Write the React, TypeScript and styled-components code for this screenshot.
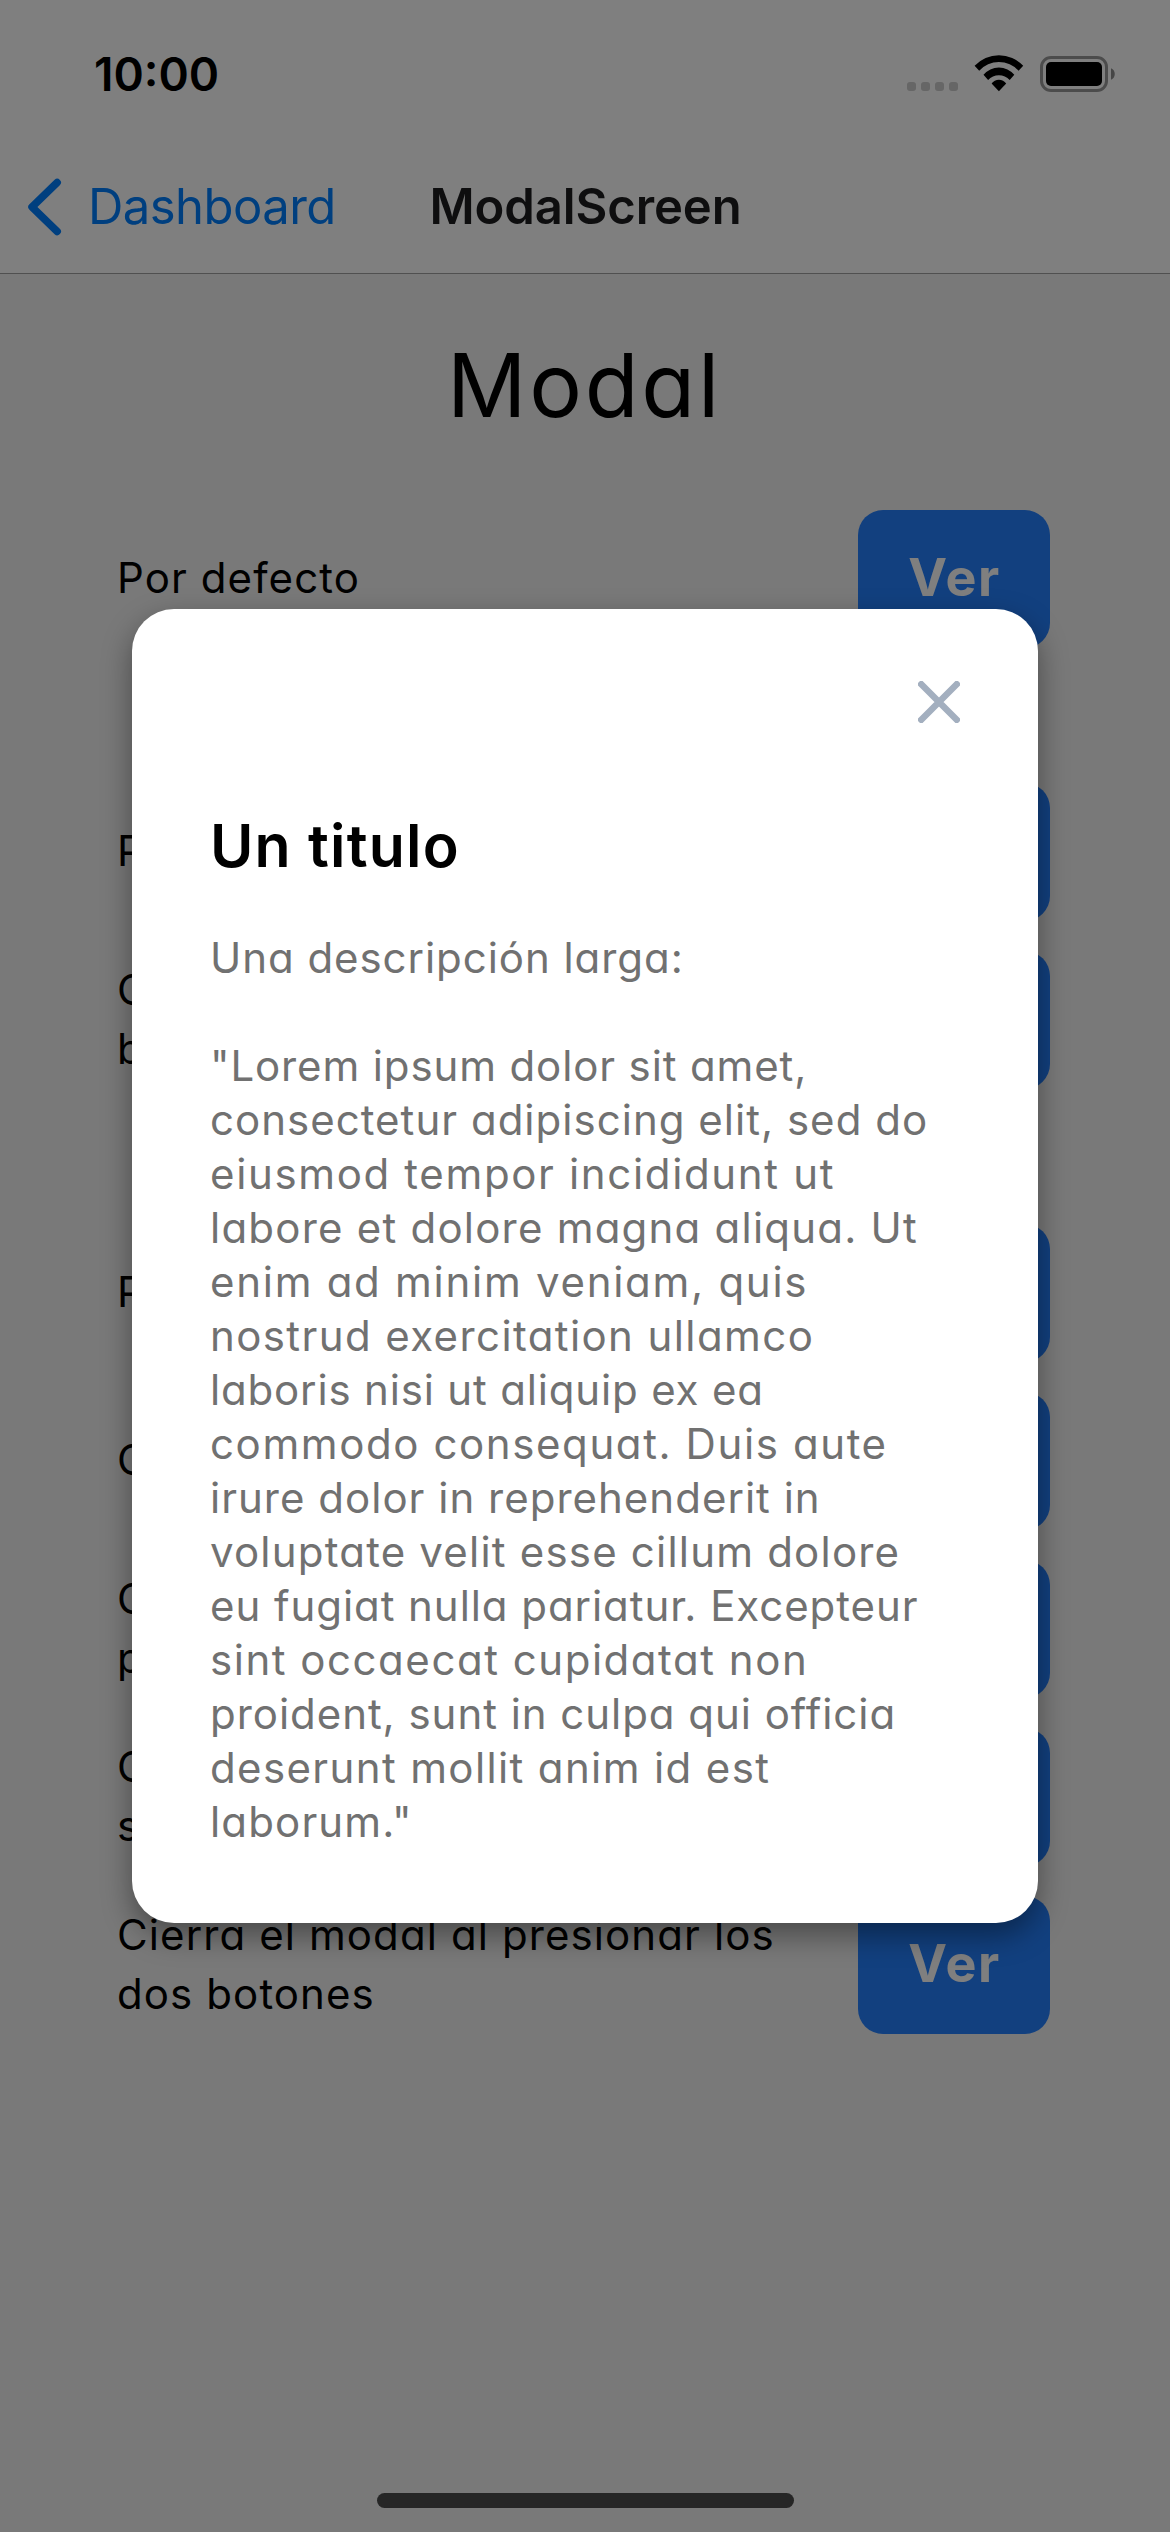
import React from "react";
import styled, { createGlobalStyle } from "styled-components";

const GlobalStyle = createGlobalStyle`
  *, *::before, *::after { box-sizing: border-box; }
  body { margin: 0; background: #797979; font-family: Inter, "Liberation Sans", sans-serif; }
  h1, h2, p { margin: 0; font-weight: 400; }
`;

const Screen = styled.div`
  position: relative;
  width: 1170px;
  height: 2532px;
  display: flex;
  flex-direction: column;
  background: #f2f2f2;
  overflow: hidden;
  color: #000;
`;

const Header = styled.header`
  background: #fff;
  height: 274px;
  border-bottom: 1px solid #a0a0a0;
`;

const StatusBar = styled.div`
  height: 141px;
  padding: 48px 54px 0 94px;
  display: flex;
  justify-content: space-between;
  align-items: flex-start;
`;

const Time = styled.span`
  font-size: 46px;
  font-weight: 600;
  line-height: 52px;
`;

const StatusIcons = styled.div`
  display: flex;
  align-items: flex-end;
  height: 37px;
  margin-top: 7px;
`;

const Dots = styled.div`
  display: flex;
  gap: 5px;
  margin: 0 16px 1px 0;
`;

const Dot = styled.span`
  width: 9px;
  height: 9px;
  border-radius: 3px;
  background: #cccccc;
`;

const WifiGlyph = styled.svg`
  width: 50px;
  height: 37px;
  margin-right: 16px;
`;

const BatteryGlyph = styled.svg`
  width: 76px;
  height: 36px;
`;

const NavBar = styled.nav`
  height: 132px;
  display: grid;
  grid-template-columns: 1fr auto 1fr;
  align-items: center;
`;

const BackLink = styled.a`
  display: flex;
  align-items: center;
  gap: 26px;
  padding-left: 27px;
  color: #007fff;
`;

const ChevronGlyph = styled.svg`
  width: 35px;
  height: 58px;
`;

const BackLabel = styled.span`
  font-size: 49px;
  line-height: 60px;
  letter-spacing: -0.55px;
`;

const NavTitle = styled.span`
  font-size: 49px;
  line-height: 60px;
  font-weight: 600;
  letter-spacing: -0.1px;
  padding-left: 1px;
  color: #1c1c1e;
`;

const Content = styled.main`
  flex: 1;
  display: flex;
  flex-direction: column;
  padding: 51px 120px 24px 117px;
  font-feature-settings: "cv11" 1;
`;

const PageTitle = styled.h1`
  font-size: 88px;
  line-height: 120px;
  letter-spacing: 2.7px;
  text-indent: 2px;
  text-align: center;
  margin-bottom: 65px;
`;

const Groups = styled.div`
  display: flex;
  flex-direction: column;
  gap: 135px;
`;

const Group = styled.section`
  display: flex;
  flex-direction: column;
  gap: 30px;
`;

const Row = styled.div`
  height: 138px;
  display: flex;
  align-items: center;
  justify-content: space-between;
`;

const RowLabel = styled.p`
  font-size: 42px;
  line-height: 58.5px;
  letter-spacing: 1.1px;
  padding-bottom: 1px;
  white-space: pre;
`;

const ViewButton = styled.button`
  width: 192px;
  height: 138px;
  border: 0;
  padding: 0 0 2px;
  border-radius: 25px;
  background: #2480ff;
  color: #fff;
  font: 700 52px/60px Inter, sans-serif;
  letter-spacing: 1.6px;
  text-indent: 1px;
`;

const HomeIndicator = styled.div`
  align-self: center;
  width: 417px;
  height: 15px;
  border-radius: 8px;
  margin: auto 0 0 4px;
  background: #4c4c4c;
`;

const Backdrop = styled.div`
  position: absolute;
  inset: 0;
  display: flex;
  align-items: center;
  justify-content: center;
  background: rgba(0, 0, 0, 0.5);
`;

const Card = styled.div`
  width: 906px;
  padding: 72px 78px 74px;
  border-radius: 42px;
  background: #fff;
  box-shadow: 0 12px 30px rgba(0, 0, 0, 0.4);
  font-feature-settings: "cv11" 1;
`;

const CloseRow = styled.div`
  display: flex;
  justify-content: flex-end;
  height: 42px;
`;

const CloseGlyph = styled.svg`
  width: 42px;
  height: 42px;
`;

const CardTitle = styled.h2`
  font-size: 59px;
  line-height: 80px;
  font-weight: 560;
  letter-spacing: 1.2px;
  margin: 83px 0 45px;
`;

const Description = styled.div`
  font-size: 42px;
  line-height: 54px;
  color: #717171;
`;

const Line = styled.p<{ $tracking: number }>`
  height: 54px;
  white-space: pre;
  letter-spacing: ${({ $tracking }) => $tracking}px;
`;

const groups = [
  ["Por defecto"],
  ["Por", "Con\nbot."],
  ["Por", "Con", "Con\npie", "Con\nsel.", "Cierra el modal al presionar los\ndos botones"],
];

const lines: [string, number][] = [
  ["Una descripción larga:", 0.95],
  ["", 0],
  ['"Lorem ipsum dolor sit amet,', 0.87],
  ["consectetur adipiscing elit, sed do", 1.02],
  ["eiusmod tempor incididunt ut", 1.65],
  ["labore et dolore magna aliqua. Ut", 1.22],
  ["enim ad minim veniam, quis", 1.72],
  ["nostrud exercitation ullamco", 1.4],
  ["laboris nisi ut aliquip ex ea", 0.83],
  ["commodo consequat. Duis aute", 1.6],
  ["irure dolor in reprehenderit in", 1.01],
  ["voluptate velit esse cillum dolore", 1.2],
  ["eu fugiat nulla pariatur. Excepteur", 0.94],
  ["sint occaecat cupidatat non", 1.53],
  ["proident, sunt in culpa qui officia", 0.96],
  ["deserunt mollit anim id est", 1.37],
  ['laborum."', 1.15],
];

const Wifi = () => (
  <WifiGlyph viewBox="0 0 50 37">
    <path d="M.6 10.8A33 33 0 0 1 49.2 10.8L44.6 15.8A26.5 26.5 0 0 0 5.2 15.8Z" />
    <path d="M9.5 19.8A20 20 0 0 1 40.3 19.8L35.7 25A14.5 14.5 0 0 0 14.1 25Z" />
    <path d="M17.6 28.6A9 9 0 0 1 32.2 28.6L24.9 36.2Z" />
  </WifiGlyph>
);

const Battery = () => (
  <BatteryGlyph viewBox="0 0 76 36">
    <rect x="1.5" y="1.5" width="65" height="33" rx="9.5" fill="none" stroke="#999" strokeWidth="3" />
    <rect x="6" y="6" width="56" height="24" rx="5" />
    <path d="M71 12.3C76 14 76 22 71 23.7Z" fill="#8c8c8c" />
  </BatteryGlyph>
);

export default function App() {
  return (
    <Screen>
      <GlobalStyle />
      <Header>
        <StatusBar>
          <Time>10:00</Time>
          <StatusIcons>
            <Dots>
              <Dot />
              <Dot />
              <Dot />
              <Dot />
            </Dots>
            <Wifi />
            <Battery />
          </StatusIcons>
        </StatusBar>
        <NavBar>
          <BackLink>
            <ChevronGlyph viewBox="0 0 35 58" fill="none" stroke="#007fff" strokeWidth="7.5" strokeLinecap="round" strokeLinejoin="round">
              <path d="M30.2 4.5L5 29L30.2 53.5" />
            </ChevronGlyph>
            <BackLabel>Dashboard</BackLabel>
          </BackLink>
          <NavTitle>ModalScreen</NavTitle>
          <span />
        </NavBar>
      </Header>
      <Content>
        <PageTitle>Modal</PageTitle>
        <Groups>
          {groups.map((rows, g) => (
            <Group key={g}>
              {rows.map((label, i) => (
                <Row key={i}>
                  <RowLabel>{label}</RowLabel>
                  <ViewButton>Ver</ViewButton>
                </Row>
              ))}
            </Group>
          ))}
        </Groups>
        <HomeIndicator />
      </Content>
      <Backdrop>
        <Card>
          <CloseRow>
            <CloseGlyph viewBox="0 0 42 42" fill="none" stroke="#a3afbf" strokeWidth="6.5">
              <path d="M1 1L41 41M41 1L1 41" />
            </CloseGlyph>
          </CloseRow>
          <CardTitle>Un titulo</CardTitle>
          <Description>
            {lines.map(([text, tracking], i) => (
              <Line key={i} $tracking={tracking}>
                {text}
              </Line>
            ))}
          </Description>
        </Card>
      </Backdrop>
    </Screen>
  );
}
